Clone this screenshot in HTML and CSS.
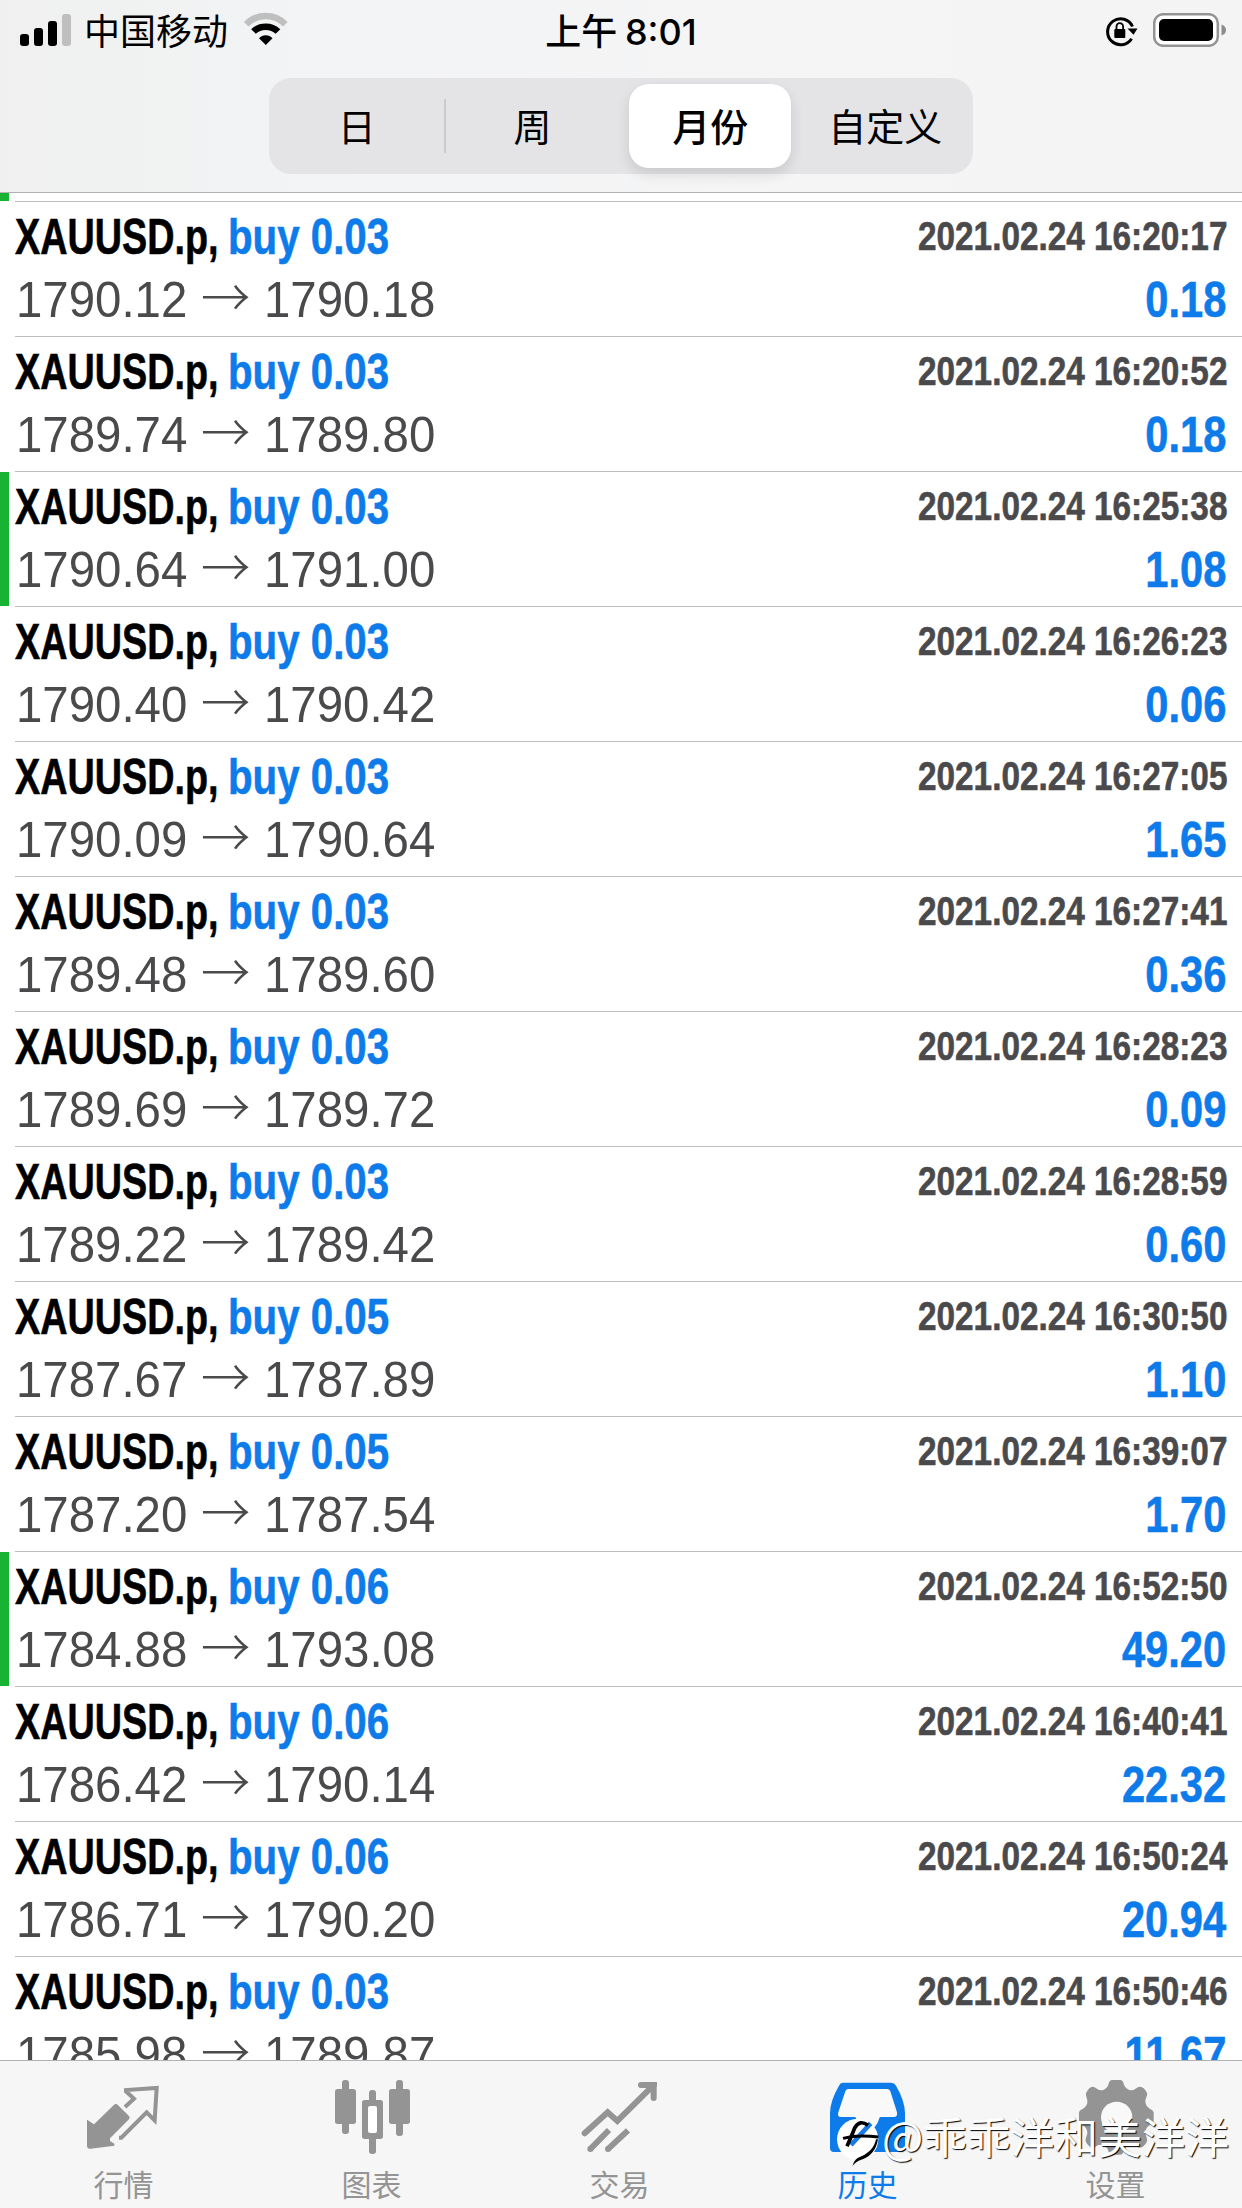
FILE: index.html
```html
<!DOCTYPE html>
<html lang="zh-CN">
<head>
<meta charset="utf-8">
<title>历史</title>
<link rel="stylesheet" href="styles.css">
</head>
<body>
<div class="screen">
  <header class="header">
    <div class="status">
      <div class="status-left">
        <svg class="signal" viewBox="0 0 52 33" width="52" height="33"><rect x="0" y="20" width="9" height="12" rx="3"/><rect x="14" y="14" width="9" height="18" rx="3"/><rect x="28" y="7" width="9" height="25" rx="3"/><rect x="42" y="0" width="9" height="32" rx="3" fill="#bfbfc0"/></svg>
        <span class="carrier">中国移动</span>
        <svg class="wifi" viewBox="0 0 46 34" width="46" height="34"><path d="M3.2 12.2C14 1.3 31.500 1.300 42.300 12.200" fill="none" stroke="#bfbfc0" stroke-width="6.500"/><path d="M10.500 19.500C17 13 28.500 13 35 19.500" fill="none" stroke="#000" stroke-width="6.500"/><path d="M16 26.300C19.500 22.300 26 22.300 29.500 26.300L22.800 33Z"/></svg>
      </div>
      <div class="clock">上午 8:01</div>
      <div class="status-right">
        <svg class="lock" viewBox="0 0 34 31" width="34" height="31"><path d="M26.600 22.700A13 13 0 1 1 27.500 10.500" fill="none" stroke="#000" stroke-width="3"/><path d="M22.500 12.500H32.500L28.500 18.800Z"/><rect x="9.300" y="13" width="11" height="9" rx="1"/><path d="M11.500 14V10.500a3.300 3.300 0 0 1 6.600 0V14" fill="none" stroke="#000" stroke-width="1.800"/></svg>
        <svg class="battery" viewBox="0 0 74 34" width="74" height="34"><rect x="1.200" y="1.200" width="63.600" height="31.600" rx="9" fill="#fff" stroke="#949494" stroke-width="2.500"/><rect x="6" y="6" width="54" height="22" rx="5"/><path d="M68.500 11.500Q73 13 73 17T68.500 22.500Z" fill="#8c8c8c"/></svg>
      </div>
    </div>
    <nav class="segments">
      <span class="segment">日</span>
      <i class="divider"></i>
      <span class="segment">周</span>
      <span class="segment active">月份</span>
      <span class="segment">自定义</span>
    </nav>
  </header>

  <main class="list">
    <div class="row stub marked"></div>
    <div class="row"><div class="line top"><span class="symbol">XAUUSD.p,</span><span class="side">buy 0.03</span><span class="date">2021.02.24 16:20:17</span></div><div class="line"><span class="price">1790.12 <i>→</i> 1790.18</span><span class="profit">0.18</span></div></div>
    <div class="row"><div class="line top"><span class="symbol">XAUUSD.p,</span><span class="side">buy 0.03</span><span class="date">2021.02.24 16:20:52</span></div><div class="line"><span class="price">1789.74 <i>→</i> 1789.80</span><span class="profit">0.18</span></div></div>
    <div class="row marked"><div class="line top"><span class="symbol">XAUUSD.p,</span><span class="side">buy 0.03</span><span class="date">2021.02.24 16:25:38</span></div><div class="line"><span class="price">1790.64 <i>→</i> 1791.00</span><span class="profit">1.08</span></div></div>
    <div class="row"><div class="line top"><span class="symbol">XAUUSD.p,</span><span class="side">buy 0.03</span><span class="date">2021.02.24 16:26:23</span></div><div class="line"><span class="price">1790.40 <i>→</i> 1790.42</span><span class="profit">0.06</span></div></div>
    <div class="row"><div class="line top"><span class="symbol">XAUUSD.p,</span><span class="side">buy 0.03</span><span class="date">2021.02.24 16:27:05</span></div><div class="line"><span class="price">1790.09 <i>→</i> 1790.64</span><span class="profit">1.65</span></div></div>
    <div class="row"><div class="line top"><span class="symbol">XAUUSD.p,</span><span class="side">buy 0.03</span><span class="date">2021.02.24 16:27:41</span></div><div class="line"><span class="price">1789.48 <i>→</i> 1789.60</span><span class="profit">0.36</span></div></div>
    <div class="row"><div class="line top"><span class="symbol">XAUUSD.p,</span><span class="side">buy 0.03</span><span class="date">2021.02.24 16:28:23</span></div><div class="line"><span class="price">1789.69 <i>→</i> 1789.72</span><span class="profit">0.09</span></div></div>
    <div class="row"><div class="line top"><span class="symbol">XAUUSD.p,</span><span class="side">buy 0.03</span><span class="date">2021.02.24 16:28:59</span></div><div class="line"><span class="price">1789.22 <i>→</i> 1789.42</span><span class="profit">0.60</span></div></div>
    <div class="row"><div class="line top"><span class="symbol">XAUUSD.p,</span><span class="side">buy 0.05</span><span class="date">2021.02.24 16:30:50</span></div><div class="line"><span class="price">1787.67 <i>→</i> 1787.89</span><span class="profit">1.10</span></div></div>
    <div class="row"><div class="line top"><span class="symbol">XAUUSD.p,</span><span class="side">buy 0.05</span><span class="date">2021.02.24 16:39:07</span></div><div class="line"><span class="price">1787.20 <i>→</i> 1787.54</span><span class="profit">1.70</span></div></div>
    <div class="row marked"><div class="line top"><span class="symbol">XAUUSD.p,</span><span class="side">buy 0.06</span><span class="date">2021.02.24 16:52:50</span></div><div class="line"><span class="price">1784.88 <i>→</i> 1793.08</span><span class="profit">49.20</span></div></div>
    <div class="row"><div class="line top"><span class="symbol">XAUUSD.p,</span><span class="side">buy 0.06</span><span class="date">2021.02.24 16:40:41</span></div><div class="line"><span class="price">1786.42 <i>→</i> 1790.14</span><span class="profit">22.32</span></div></div>
    <div class="row"><div class="line top"><span class="symbol">XAUUSD.p,</span><span class="side">buy 0.06</span><span class="date">2021.02.24 16:50:24</span></div><div class="line"><span class="price">1786.71 <i>→</i> 1790.20</span><span class="profit">20.94</span></div></div>
    <div class="row"><div class="line top"><span class="symbol">XAUUSD.p,</span><span class="side">buy 0.03</span><span class="date">2021.02.24 16:50:46</span></div><div class="line"><span class="price">1785.98 <i>→</i> 1789.87</span><span class="profit">11.67</span></div></div>
  </main>

  <footer class="tabs">
    <div class="tab">
      <svg viewBox="237 114 270 240"><path fill="currentColor" d="M344 193Q349 190 353 194L387 228Q391 233 387 238L330 295V303L343 311V317L272 326Q262 328 261 318V239L282 253Z"/><path fill="none" stroke="currentColor" stroke-width="12" d="M375 201L402 176L378 154V150L470 144L464 241L440 217L364 293H357"/></svg>
      <span>行情</span>
    </div>
    <div class="tab">
      <svg viewBox="981 114 270 240"><g fill="currentColor"><rect x="1026" y="120" width="21" height="162" rx="9"/><rect x="1005" y="147" width="63" height="105" rx="8"/><rect x="1107" y="150" width="21" height="192" rx="9"/><rect x="1086" y="180" width="63" height="117" rx="8"/><rect x="1188" y="120" width="21" height="168" rx="9"/><rect x="1167" y="147" width="63" height="105" rx="8"/></g><rect x="1104" y="198" width="27" height="81" rx="6" fill="#fff"/></svg>
      <span>图表</span>
    </div>
    <div class="tab">
      <svg viewBox="225 114 270 240"><g fill="none" stroke="currentColor" stroke-width="18"><path stroke-linecap="round" d="M254 280L323 217L352 243L460 136M423 135H461V174"/><path d="M461 126V140H471V126Z" stroke="none" fill="currentColor"/><path d="M270 328L327 270M323 328L384 271"/></g><circle cx="271" cy="327" r="9" fill="currentColor"/><circle cx="324" cy="327" r="9" fill="currentColor"/></svg>
      <span>交易</span>
    </div>
    <div class="tab selected">
      <svg viewBox="129 114 270 240"><path fill="currentColor" d="M188 128H332Q343 128 348 137Q375 183 375 220V324Q375 336 363 336H162Q150 336 150 324V220Q150 183 177 137Q181 128 188 128Z"/><path fill="#f9f9f9" d="M205 147H321Q328 147 331 154L351 217Q354 231 341 231H302Q298 231 297 237Q290 267 263 267T229 237Q228 231 224 231H184Q170 231 175 217L196 154Q199 147 205 147Z"/></svg>
      <span>历史</span>
    </div>
    <div class="tab">
      <svg viewBox="873 114 270 240"><path fill="currentColor" fill-rule="evenodd" d="M995 120H1022Q1029 121 1032 134Q1036 145 1050 151Q1061 152 1071 143Q1082 136 1091 145Q1104 158 1101 166L1096 181Q1095 198 1110 207Q1121 211 1121 219V243Q1121 250 1109 256Q1095 264 1096 281L1101 296Q1104 304 1091 318Q1082 326 1071 320Q1061 312 1049 316Q1037 320 1033 330Q1029 344 1021 344H994Q988 343 984 330Q980 319 967 315Q956 312 946 320Q936 326 927 318Q914 304 917 296L922 281Q923 264 908 256Q897 250 897 243V219Q897 211 908 207Q924 198 922 181L918 166Q916 158 928 145Q936 137 946 143Q956 152 968 151Q981 145 985 134Q988 121 995 120Z"/><circle cx="1010" cy="232" r="47" fill="#f9f9f9"/></svg>
      <span>设置</span>
    </div>
    <div class="watermark">
      <svg viewBox="160 225 135 165" width="45" height="55"><circle cx="231" cy="298" r="62" fill="#fff"/><path d="M270 250L211 315" stroke="#1879e8" stroke-width="14"/><path d="M262 256Q237 237 222 264Q214 285 199 319" fill="none" stroke="#000" stroke-width="11"/><path d="M187 295Q231 283 293 291" fill="none" stroke="#000" stroke-width="9"/><path d="M286 298Q279 336 231 354Q219 362 215 381Q218 370 234 362Q284 349 292 298Z"/></svg>
      <span>@乖乖洋和美洋洋</span>
    </div>
  </footer>
</div>
</body>
</html>
```
FILE: styles.css
```css
* { box-sizing: border-box; }
body {
  margin: 0;
  background: #fff;
  font-family: "Liberation Sans", "Noto Sans CJK SC", sans-serif;
}
.screen {
  width: 1242px;
  height: 2208px;
  display: flex;
  flex-direction: column;
  overflow: hidden;
}

.header {
  flex: none;
  height: 193px;
  border-bottom: 1px solid #b2b2b4;
  background: linear-gradient(90deg, #eff0ef 0, #f2f3f4 22%, #f5f5f6 60%, #f5f4f5 100%);
}
.status {
  height: 78px;
  display: grid;
  grid-template-columns: 1fr auto 1fr;
  font: 400 36px/64px "Inter", "Noto Sans CJK SC", sans-serif;
}
.status-left, .status-right { display: flex; align-items: flex-start; }
.status-left { padding-left: 20px; }
.status-right { justify-content: flex-end; padding-right: 15px; }
.signal { margin-top: 14px; }
.carrier { margin-left: 12px; }
.wifi { margin: 12px 0 0 15px; }
.clock {
  font-weight: 500;
  font-feature-settings: "case";
  word-spacing: -2px;
}
.lock { margin-top: 16px; }
.battery { margin: 13px 0 0 14px; }

.segments {
  width: 704px;
  height: 96px;
  margin: 0 auto;
  border-radius: 22px;
  background: #e4e4e6;
  display: flex;
  align-items: center;
}
.segment {
  flex: 1 1 0;
  height: 84px;
  font: 400 38px/81px "Noto Sans CJK SC", sans-serif;
  text-align: center;
}
.active {
  flex: 0 0 162px;
  margin: 0 6px 0 9px;
  border-radius: 20px;
  background: #fff;
  font-weight: 500;
  box-shadow: 0 6px 14px rgba(0, 0, 0, .12);
}
.divider { width: 2px; height: 54px; margin: 0 -1px; background: #cbcbce; }

.list { flex: 1 1 0; min-height: 0; overflow: hidden; }
.row {
  height: 135px;
  padding: 4px 15px 0;
  background: linear-gradient(#bdbdbf, #bdbdbf) 15px 100% / 100% 1px no-repeat;
}
.stub { height: 9px; padding: 0; }
.marked {
  background:
    linear-gradient(#18b333, #18b333) 0 0 / 9px calc(100% - 1px) no-repeat,
    linear-gradient(#bdbdbf, #bdbdbf) 15px 100% / 100% 1px no-repeat;
}
.line {
  display: flex;
  height: 63px;
  line-height: 63px;
  white-space: nowrap;
  font-size: 50px;
}
.symbol, .side, .date, .profit {
  font-weight: 700;
  -webkit-text-stroke: .6px currentColor;
}
.symbol, .side { transform-origin: 0 50%; }
.symbol { flex: 0 0 213px; width: 213px; transform: scaleX(.755); }
.side { color: #0d7bea; transform: scaleX(.805); }
.date, .profit {
  margin-left: auto;
  transform-origin: 100% 50%;
  transform: scaleX(.833);
}
.date { font-size: 40px; line-height: 61px; color: #4a4a4c; }
.profit { margin-right: 1px; color: #0d7bea; }
.price {
  margin-left: 1px;
  color: #4a4a4c;
  transform: scaleX(.948);
  transform-origin: 0 50%;
}
.price i {
  display: inline-block;
  width: 53px;
  font: 300 52px/50px "Noto Sans CJK SC", sans-serif;
  text-align: center;
}

.tabs {
  flex: none;
  position: relative;
  height: 148px;
  border-top: 1px solid #b2b2b4;
  background: #f6f6f6;
  display: flex;
}
.tab {
  flex: 0 0 248px;
  padding-top: 17px;
  display: flex;
  flex-direction: column;
  align-items: center;
  color: #949494;
  font: 400 30px/36px "Noto Sans CJK SC", sans-serif;
}
.tab svg { width: 90px; height: 80px; }
.tab span { margin-top: 7px; padding-right: 1px; }
.selected { color: #0d7bea; }
.watermark {
  position: absolute;
  left: 834px;
  top: 54px;
  display: flex;
  color: #fff;
  font: 400 43.7px/40px "Noto Sans CJK SC", sans-serif;
  text-shadow: 1px 1px 1px #000;
  white-space: nowrap;
}
.watermark span { margin-left: 3px; }
```
